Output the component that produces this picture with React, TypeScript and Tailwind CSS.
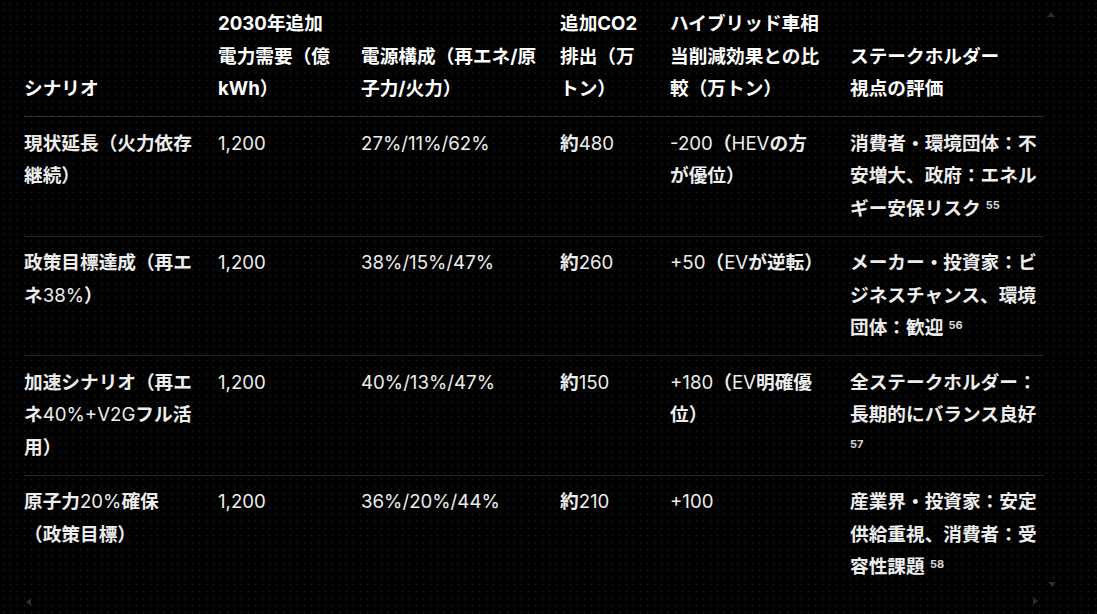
import React from "react";

const CJK = /([\u3000-\u30ff\u3400-\u9fff\uff00-\uffef]+)/;

function J({ t }: { t: string }) {
  const parts = t.split(CJK);
  return (
    <>
      {parts.map((p, i) =>
        CJK.test(p) ? (
          <span key={i} className="font-bold">
            {p}
          </span>
        ) : (
          <span key={i}>{p}</span>
        )
      )}
    </>
  );
}

function Sup({ n }: { n: string }) {
  return <sup className="text-[11px] font-bold text-[#d8d8d8]">{n}</sup>;
}

type Row = {
  a: React.ReactNode;
  b: string;
  c: string;
  d: string;
  e: React.ReactNode;
  f: React.ReactNode;
};

const rows: Row[] = [
  {
    a: <J t="現状延長（火力依存継続）" />,
    b: "1,200",
    c: "27%/11%/62%",
    d: "約480",
    e: (
      <>
        <J t="-200（HEVの方" />
        <br />
        <J t="が優位）" />
      </>
    ),
    f: (
      <>
        <J t="消費者・環境団体：不安増大、政府：エネルギー安保リスク" /> <Sup n="55" />
      </>
    ),
  },
  {
    a: <J t="政策目標達成（再エネ38%）" />,
    b: "1,200",
    c: "38%/15%/47%",
    d: "約260",
    e: <J t="+50（EVが逆転）" />,
    f: (
      <>
        <J t="メーカー・投資家：ビジネスチャンス、環境団体：歓迎" /> <Sup n="56" />
      </>
    ),
  },
  {
    a: <J t="加速シナリオ（再エネ40%+V2Gフル活用）" />,
    b: "1,200",
    c: "40%/13%/47%",
    d: "約150",
    e: <J t="+180（EV明確優位）" />,
    f: (
      <>
        <J t="全ステークホルダー：長期的にバランス良好" /> <Sup n="57" />
      </>
    ),
  },
  {
    a: (
      <>
        <J t="原子力20%確保" />
        <br />
        <J t="（政策目標）" />
      </>
    ),
    b: "1,200",
    c: "36%/20%/44%",
    d: "約210",
    e: <J t="+100" />,
    f: (
      <>
        <J t="産業界・投資家：安定供給重視、消費者：受容性課題" /> <Sup n="58" />
      </>
    ),
  },
];

function Tri({ dir }: { dir: "up" | "down" | "left" | "right" }) {
  const pts =
    dir === "up"
      ? "0,6 4,1 8,6"
      : dir === "down"
      ? "0,1 8,1 4,6"
      : dir === "left"
      ? "6,0 6,8 1,4"
      : "1,0 1,8 6,4";
  return (
    <svg width="8" height="8" viewBox="0 0 8 8">
      <polygon points={pts} fill="#2b2b2b" />
    </svg>
  );
}

export default function App() {
  const th =
    "align-bottom text-left font-bold text-white pt-0 pb-[10px] border-b border-[#2e2e2e]";
  const td = "align-top text-left pt-[10.5px] pb-[10px]";
  return (
    <div className="relative w-[1097px] h-[614px] overflow-hidden bg-[#000] bg-[radial-gradient(circle,#161616_0.8px,transparent_1.2px)] bg-[length:7px_7px] font-[Inter,'Noto_Sans_CJK_JP',sans-serif] text-[18.67px] leading-[32.67px] text-[#ededed]">
      <div className="pl-[24px] pt-[8px]">
        <table className="table-fixed border-collapse w-[1020px]">
          <colgroup>
            <col className="w-[194px]" />
            <col className="w-[143px]" />
            <col className="w-[199px]" />
            <col className="w-[110px]" />
            <col className="w-[180px]" />
            <col className="w-[194px]" />
          </colgroup>
          <thead>
            <tr>
              <th className={`${th} pr-[20px]`}>シナリオ</th>
              <th className={`${th} pr-[27px]`}>2030年追加電力需要（億kWh）</th>
              <th className={`${th} pr-[15px]`}>電源構成（再エネ/原子力/火力）</th>
              <th className={`${th} pr-[25px]`}>追加CO2排出（万トン）</th>
              <th className={`${th} pr-[24px]`}>ハイブリッド車相当削減効果との比較（万トン）</th>
              <th className={`${th} pr-0`}>
                ステークホルダー
                <br />
                視点の評価
              </th>
            </tr>
          </thead>
          <tbody>
            {rows.map((r, i) => (
              <tr key={i} className="border-b border-[#242424] last:border-b-0">
                <td className={`${td} pr-[20px]`}>{r.a}</td>
                <td className={`${td} pr-[27px]`}>{r.b}</td>
                <td className={`${td} pr-[15px]`}>{r.c}</td>
                <td className={`${td} pr-[25px]`}>
                  <J t={r.d} />
                </td>
                <td className={`${td} pr-[24px]`}>{r.e}</td>
                <td className={`${td} pr-0`}>{r.f}</td>
              </tr>
            ))}
          </tbody>
        </table>
      </div>
      <div className="absolute left-[1047px] top-[11px]">
        <Tri dir="up" />
      </div>
      <div className="absolute left-[1048px] top-[581px]">
        <Tri dir="down" />
      </div>
      <div className="absolute left-[25px] top-[598px]">
        <Tri dir="left" />
      </div>
      <div className="absolute left-[1032px] top-[597px]">
        <Tri dir="right" />
      </div>
    </div>
  );
}
